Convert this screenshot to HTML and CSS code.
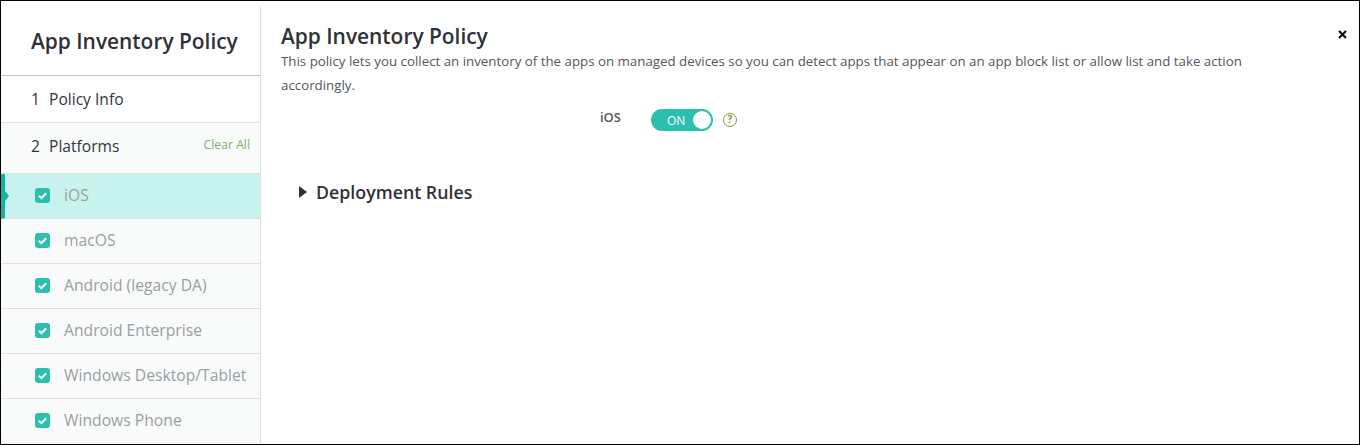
FILE: index.html
```html
<!DOCTYPE html>
<html lang="en">
<head>
  <meta charset="UTF-8" />
  <title>App Inventory Policy</title>
  <link rel="stylesheet" href="styles.css">
</head>

<body>
  <div class="frame">
    <div class="sidebar">
      <h2 class="side-title">App Inventory Policy</h2>
      <div class="step step-info"><span class="step-num">1</span>Policy Info</div>
      <div class="step step-platforms">
        <span class="step-num">2</span>Platforms
        <a class="clear-all">Clear All</a>
      </div>
      <ul class="platforms">
        <li class="platform active">
          <svg class="check" viewBox="0 0 15 15"><rect width="15" height="15" rx="3" fill="#2cbfae"/><path d="M3.8 7.8l2.6 2.4 4.8-4.9" fill="none" stroke="#fff" stroke-width="2"/></svg>
          iOS
        </li>
        <li class="platform">
          <svg class="check" viewBox="0 0 15 15"><rect width="15" height="15" rx="3" fill="#2cbfae"/><path d="M3.8 7.8l2.6 2.4 4.8-4.9" fill="none" stroke="#fff" stroke-width="2"/></svg>
          macOS
        </li>
        <li class="platform">
          <svg class="check" viewBox="0 0 15 15"><rect width="15" height="15" rx="3" fill="#2cbfae"/><path d="M3.8 7.8l2.6 2.4 4.8-4.9" fill="none" stroke="#fff" stroke-width="2"/></svg>
          Android (legacy DA)
        </li>
        <li class="platform">
          <svg class="check" viewBox="0 0 15 15"><rect width="15" height="15" rx="3" fill="#2cbfae"/><path d="M3.8 7.8l2.6 2.4 4.8-4.9" fill="none" stroke="#fff" stroke-width="2"/></svg>
          Android Enterprise
        </li>
        <li class="platform">
          <svg class="check" viewBox="0 0 15 15"><rect width="15" height="15" rx="3" fill="#2cbfae"/><path d="M3.8 7.8l2.6 2.4 4.8-4.9" fill="none" stroke="#fff" stroke-width="2"/></svg>
          Windows Desktop/Tablet
        </li>
        <li class="platform">
          <svg class="check" viewBox="0 0 15 15"><rect width="15" height="15" rx="3" fill="#2cbfae"/><path d="M3.8 7.8l2.6 2.4 4.8-4.9" fill="none" stroke="#fff" stroke-width="2"/></svg>
          Windows Phone
        </li>
      </ul>
    </div>

    <div class="content">
      <div class="content-head">
        <div class="head-text">
          <h2 class="main-title">App Inventory Policy</h2>
          <p class="desc">This policy lets you collect an inventory of the apps on managed devices so you can detect apps that appear on an app block list or allow list and take action accordingly.</p>
        </div>
        <svg class="close" viewBox="0 0 9 9"><path d="M1 1l7 7M8 1L1 8" stroke="#111" stroke-width="2.2" fill="none"/></svg>
      </div>

      <div class="toggle-row">
        <span class="toggle-label">iOS</span>
        <div class="toggle">
          <span class="toggle-text">ON</span>
          <span class="knob"></span>
        </div>
        <span class="help">?</span>
      </div>

      <div class="rules">
        <span class="caret"></span>
        <h3 class="rules-title">Deployment Rules</h3>
      </div>
    </div>
  </div>
</body>
</html>
```

FILE: styles.css
```css
* {
  box-sizing: border-box;
}
body {
  margin: 0;
  font-family: "Open Sans", Arial, sans-serif;
  background: white;
}
.frame {
  display: flex;
  height: 445px;
  border: 1px solid #000;
  background: white;
}
.sidebar {
  width: 260px;
  flex-shrink: 0;
  border-right: 1px solid #ddd;
  margin-top: 5px;
}
.side-title {
  margin: 0;
  height: 70px;
  padding: 20px 0 0 30px;
  font-size: 20.9px;
  line-height: 30px;
  font-weight: 600;
  color: #2f3138;
  border-bottom: 1px solid #c4c4c4;
}
.step {
  display: flex;
  align-items: center;
  padding-left: 30px;
  font-size: 15.6px;
  color: #33363d;
}
.step-num {
  width: 18px;
}
.step-info {
  height: 47px;
  border-bottom: 1px solid #e0e0e0;
}
.step-platforms {
  height: 51px;
  padding-bottom: 4px;
  background: #f9fbfb;
  border-bottom: 1px solid #e0e0e0;
}
.clear-all {
  margin-left: auto;
  margin-right: 10px;
  margin-bottom: 3px;
  font-size: 12.2px;
  color: #7fb069;
}
.platforms {
  list-style: none;
  margin: 0;
  padding: 0;
}
.platform {
  position: relative;
  display: flex;
  align-items: center;
  height: 45px;
  padding-left: 34px;
  padding-bottom: 2px;
  font-size: 15.7px;
  color: #9b9ea3;
  background: #f9fbfb;
  border-bottom: 1px solid #e0e0e0;
}
.platform:last-child {
  border-bottom: none;
  padding-bottom: 3px;
}
.platform.active {
  background: #c9f3ee;
  border-left: 4px solid #12b5a2;
  padding-left: 30px;
}
.platform.active::after {
  content: "";
  position: absolute;
  left: 0;
  top: 17px;
  border-left: 4px solid #12b5a2;
  border-top: 5px solid transparent;
  border-bottom: 5px solid transparent;
}
.check {
  width: 15px;
  height: 15px;
  margin-right: 14px;
  flex-shrink: 0;
}
.content {
  flex: 1;
  padding: 20px 10px 0 20px;
}
.content-head {
  display: flex;
  align-items: flex-start;
}
.head-text {
  flex: 1;
  padding-right: 85px;
}
.main-title {
  margin: 0;
  font-size: 20.9px;
  line-height: 30px;
  font-weight: 600;
  color: #2f3138;
}
.desc {
  margin: -2px 0 0;
  font-size: 13.3px;
  line-height: 24px;
  color: #54575e;
}
.close {
  width: 9px;
  height: 9px;
  margin-top: 9px;
  margin-right: 2px;
}
.toggle-row {
  display: flex;
  align-items: center;
  margin-top: 11px;
  height: 24px;
}
.toggle-label {
  width: 370px;
  padding-left: 319px;
  font-size: 13px;
  font-weight: 600;
  color: #54575e;
  margin-bottom: 6px;
}
.toggle {
  position: relative;
  width: 62px;
  height: 22px;
  border-radius: 11px;
  background: #2cbfae;
  display: flex;
  align-items: center;
  padding-left: 16px;
}
.toggle-text {
  font-size: 12px;
  color: white;
}
.knob {
  position: absolute;
  right: 2px;
  top: 2px;
  width: 18px;
  height: 18px;
  border-radius: 50%;
  background: white;
}
.help {
  width: 14px;
  height: 14px;
  margin-left: 10px;
  border: 1.5px solid #7f9a3c;
  border-radius: 50%;
  font-size: 10px;
  font-weight: 700;
  line-height: 11px;
  text-align: center;
  color: #7f9a3c;
}
.rules {
  display: flex;
  align-items: center;
  margin-top: 47px;
  padding-left: 18px;
}
.caret {
  border-left: 8px solid #2f3138;
  border-top: 6px solid transparent;
  border-bottom: 6px solid transparent;
  margin-right: 9px;
}
.rules-title {
  margin: 0;
  font-size: 17.8px;
  line-height: 26px;
  font-weight: 600;
  color: #2f3138;
}
```
